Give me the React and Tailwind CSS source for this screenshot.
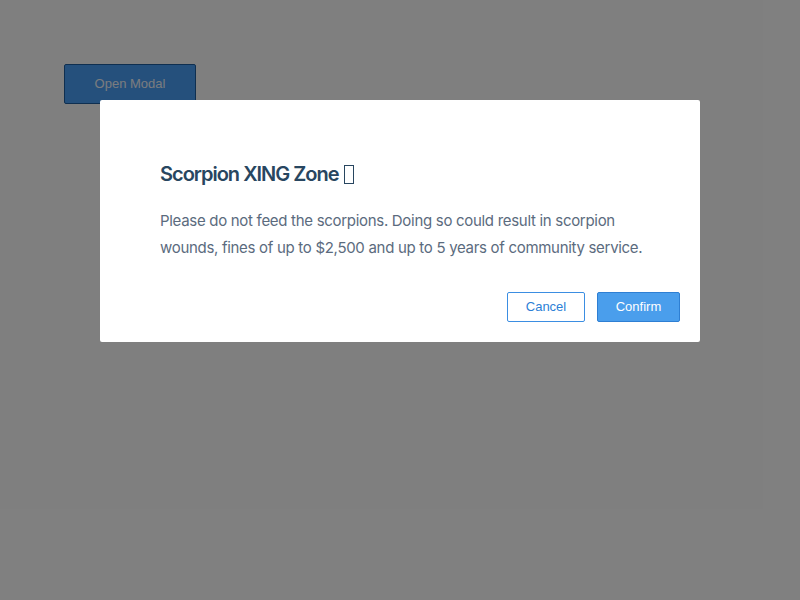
export default function App() {
  return (
    <div className="relative w-[800px] h-[600px] bg-white overflow-hidden">
      <div className="p-16">
        <button className="w-[132px] h-10 rounded-[2px] border border-[#1f5fa0] bg-[#4aa0f8] text-[#f4f8ff] text-[13px] font-['Liberation_Sans',Arial,sans-serif]">
          Open Modal
        </button>
      </div>
      <div className="absolute inset-0 bg-black/50 flex justify-center items-start pt-[100px]">
        <div className="w-[600px] bg-white rounded-[2px] flex flex-col font-['Inter',sans-serif]">
          <div className="pl-[60px] pr-[40px] pt-[60px]">
            <h2 className="text-[20px] leading-7 font-semibold text-[#284660] tracking-[-1px] flex items-center">
              <span>Scorpion XING Zone</span>
              <span className="inline-block ml-[5px] w-[10px] h-[19px] border-[1.5px] border-[#284660]" />
            </h2>
            <p className="mt-[19px] text-[15px] leading-[27px] text-[#5b6b7e] tracking-[-0.3px]">
              Please do not feed the scorpions. Doing so could result in scorpion wounds, fines of up to $2,500 and up to 5 years of community service.
            </p>
          </div>
          <div className="flex justify-end gap-3 px-5 pt-[31px] pb-5 font-['Liberation_Sans',Arial,sans-serif]">
            <button className="w-[78px] h-[30px] rounded-[2px] border border-[#3b8ee2] bg-white text-[#2c7fd6] text-[13px]">
              Cancel
            </button>
            <button className="w-[83px] h-[30px] rounded-[2px] border border-[#2e7fd3] bg-[#4a9eec] text-white text-[13px]">
              Confirm
            </button>
          </div>
        </div>
      </div>
    </div>
  );
}
